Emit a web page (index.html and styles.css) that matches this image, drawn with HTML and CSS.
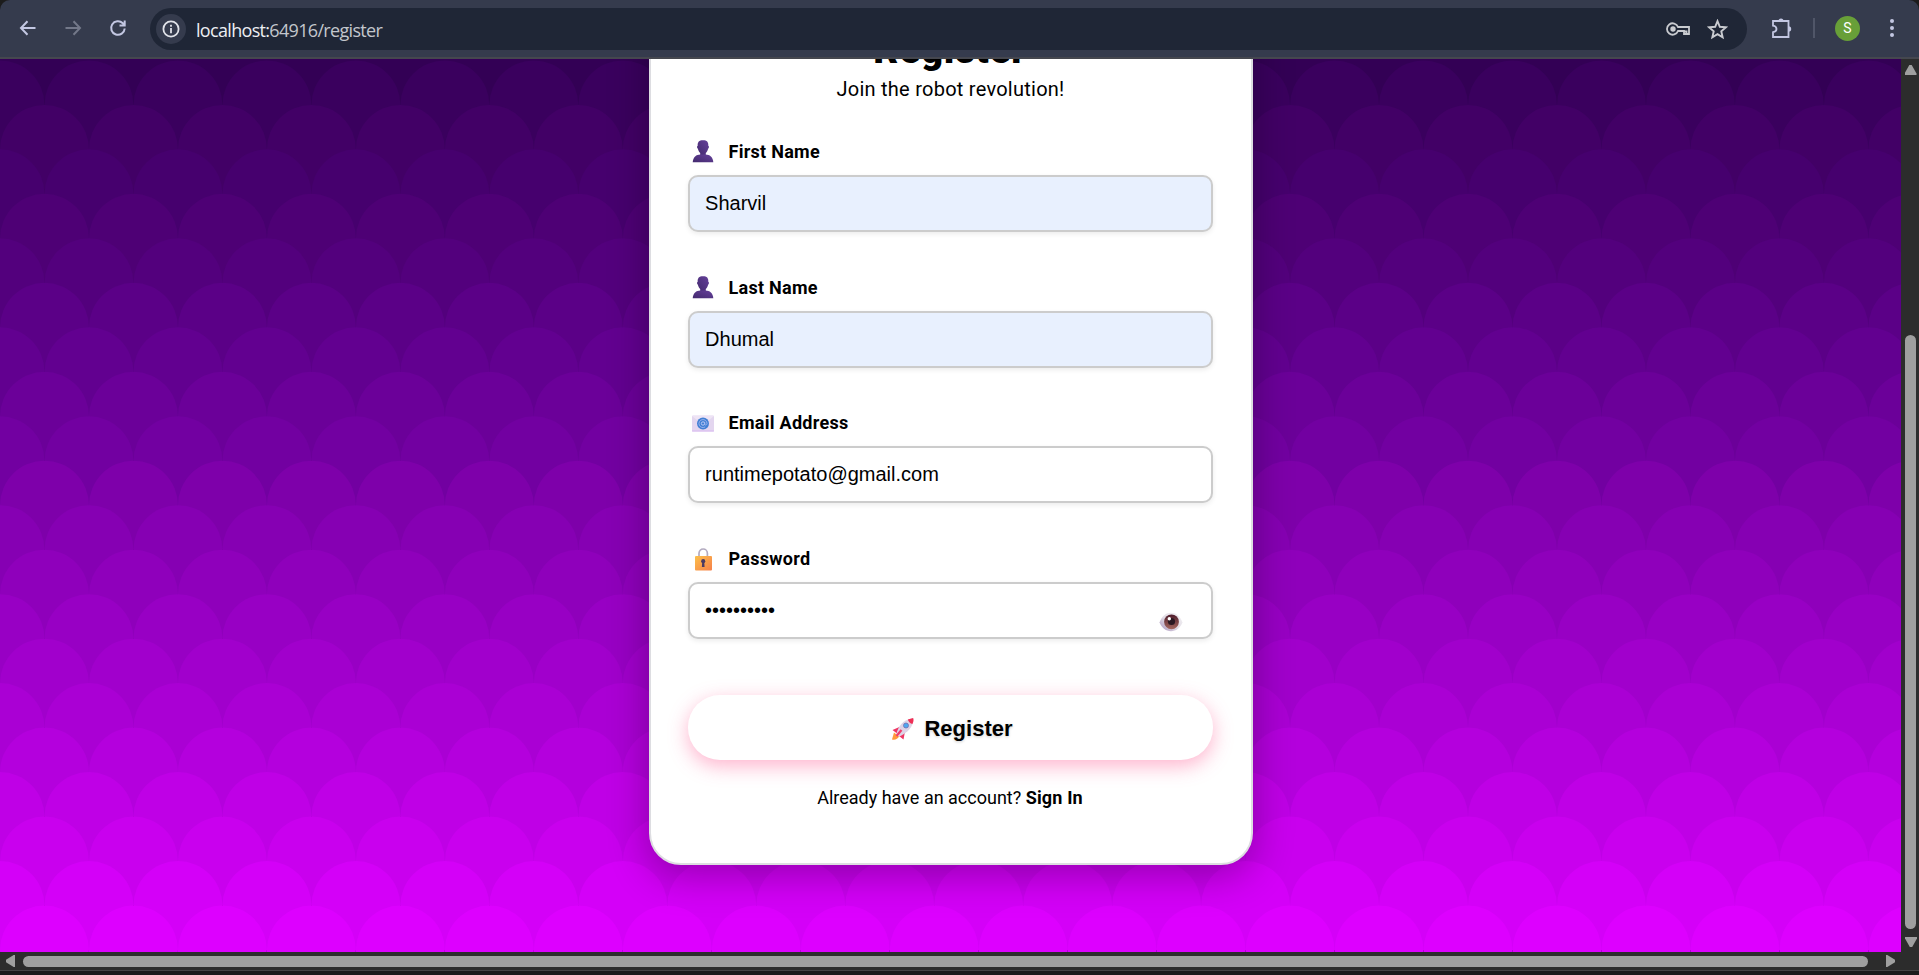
FILE: index.html
```html
<!DOCTYPE html>
<html lang="en">
<head>
<meta charset="utf-8">
<title>Register</title>
<link rel="stylesheet" href="styles.css">
</head>
<body>
<div class="browser">
  <header class="toolbar">
    <nav class="nav">
      <svg class="ico" viewBox="0 0 20 20"><path d="M17.500 10H3.500M9.500 3.300L3 10l6.500 6.700"/></svg>
      <svg class="ico dim" viewBox="0 0 20 20"><path d="M2.500 10h14M10.500 3.300L17 10l-6.500 6.700"/></svg>
      <svg class="ico" viewBox="0 0 20 20"><path d="M16.700 10.500a6.800 6.800 0 1 1-1.900-5.200l2 2M16.700 2.500v5H11.500"/></svg>
    </nav>
    <div class="omnibox">
      <span class="info"><svg viewBox="0 0 20 20"><circle cx="10" cy="10" r="7.600"/><path d="M10 9v5.200M10 5.700v2"/></svg></span>
      <span class="url">localhost:<span class="path">64916/register</span></span>
      <svg class="key" viewBox="0 0 24 14"><path d="M12 5h11v7h-5V9h-6a5.700 5.700 0 1 1 0-4z"/><path d="M18 9.500h2.500V12"/><circle cx="7" cy="7" r="2.700" class="solid"/></svg>
      <svg class="star" viewBox="0 0 20 20"><path d="M10 2l2.200 5.400 5.800.5-4.400 3.800 1.300 5.700-4.900-3-4.900 3 1.300-5.700L2 7.900l5.800-.5z"/></svg>
    </div>
    <div class="actions">
      <svg class="puzzle" viewBox="0 0 22 22"><path d="M2 4h15.500v16H2v-4.800c2.800-.5 3.500-1.500 3.500-3.200S4.800 9.200 2 8.700z"/><path class="solid" d="M7.500 4a2.500 2.500 0 0 1 5 0zM17.500 9.200a2.700 2.700 0 0 1 0 5.400z"/></svg>
      <span class="sep"></span>
      <span class="avatar">S</span>
      <svg class="dots" viewBox="0 0 6 20"><circle cx="3" cy="3" r="2"/><circle cx="3" cy="10" r="2"/><circle cx="3" cy="17" r="2"/></svg>
    </div>
  </header>

  <div class="viewport">
    <main class="page">
      <svg class="scales" viewBox="0 0 1901 893" id="scales"></svg>
      <section class="card">
        <h1>Register</h1>
        <p class="subtitle">Join the robot revolution!</p>
        <form>
          <div class="field">
            <label><svg class="emoji" viewBox="0 0 24 24"><use href="#person"/></svg>First Name</label>
            <div class="input filled">Sharvil</div>
          </div>
          <div class="field">
            <label><svg class="emoji" viewBox="0 0 24 24"><use href="#person"/></svg>Last Name</label>
            <div class="input filled">Dhumal</div>
          </div>
          <div class="field">
            <label><svg class="emoji" viewBox="0 0 24 24"><rect x="1" y="4.500" width="22" height="16" rx="1" fill="#e3d6ef"/><path d="M1 5l11 9 11-9" fill="#eee4f5"/><path d="M1 19.500h22v1H1z" fill="#d9b8f0"/><circle cx="12" cy="12.500" r="6" fill="#4280d4"/><circle cx="12" cy="12.500" r="1.700" fill="none" stroke="#b9c9f5" stroke-width="1"/><path d="M13.700 10.800v2.300c0 1.500 2.300 1.200 2.300-.7a4 4 0 1 0-1.800 3.500" fill="none" stroke="#a9bdf2" stroke-width=".8"/></svg>Email Address</label>
            <div class="input">runtimepotato@gmail.com</div>
          </div>
          <div class="field">
            <label><svg class="emoji" viewBox="0 0 24 24"><path d="M8 11V6.200a4.200 4.200 0 0 1 8.400 0V11" fill="none" stroke="#b3abc0" stroke-width="1.700"/><rect x="4" y="9" width="17" height="14.500" rx="1" fill="url(#gold)"/><circle cx="12.200" cy="14.200" r="2.100" fill="#4b3a62"/><path d="M11.300 14h1.900l.4 6h-2.700z" fill="#4b3a62"/></svg>Password</label>
            <div class="input password">••••••••••<svg class="eye" viewBox="0 0 24 20"><path d="M.5 10.500C3 4 7 .8 12 .8S21 4 23.500 10.500C21 16 17 19.200 12 19.200S3 16 .5 10.500z" fill="url(#white)"/><circle cx="12.500" cy="9.800" r="7.400" fill="url(#iris)"/><circle cx="12.500" cy="9.500" r="3.600" fill="#2a1822"/><circle cx="10.300" cy="6.800" r="1.700" fill="#fff"/></svg></div>
          </div>
          <div class="button"><svg class="rocket" viewBox="0 0 24 24"><path d="M3 15.500L1 22.500c3 .8 6-.5 7-3z" fill="#ff9a3c"/><path d="M9.500 9.500L1.500 13l4.500 3.500 5-3zM14 14.500L12.500 22.500 8 19l2-5z" fill="#ee3563"/><path d="M5.500 16.500C7 9.500 12 2.500 22 1.200c1 9-6 14.300-13.500 18.300z" fill="#ddd3e6"/><path d="M16.800 2.500l5.400-1.500c.7 2.200.2 4-.8 6-2-.5-4-2.200-4.600-4.500z" fill="#ee2f55"/><path d="M10.500 13L5.500 19" stroke="#f23c6c" stroke-width="2.300"/><circle cx="15" cy="8.500" r="2.500" fill="#4da8ef" stroke="#746eb3" stroke-width=".8"/></svg>Register</div>
        </form>
        <p class="signin">Already have an account? <b>Sign In</b></p>
      </section>
    </main>
    <div class="vbar"><i class="up"></i><div class="vthumb"></div><i class="down"></i></div>
  </div>
  <div class="hbar"><i class="left"></i><div class="hthumb"></div><i class="right"></i></div>
  <div class="bottom"></div>
</div>

<svg class="defs">
  <defs>
    <linearGradient id="violet" x1="0" x2="1" y1="1" y2="0"><stop offset="0" stop-color="#432a6e"/><stop offset="1" stop-color="#65409a"/></linearGradient>
    <linearGradient id="gold" x1="0" x2="1" y1="0" y2="1"><stop offset="0" stop-color="#fcc04a"/><stop offset="1" stop-color="#f6804a"/></linearGradient>
    <linearGradient id="iris" x1="0" x2="0" y1="0" y2="1"><stop offset="0" stop-color="#4d1c2b"/><stop offset="1" stop-color="#a4675f"/></linearGradient>
    <linearGradient id="white" x1="0" x2="1" y1="1" y2="0"><stop offset="0" stop-color="#a993bd"/><stop offset=".5" stop-color="#e4dfe7"/><stop offset="1" stop-color="#f4f2f5"/></linearGradient>
    <g id="person" fill="url(#violet)"><path d="M12 1.300c4 0 5.500 1.800 5.300 5.500.9.200.9 2.400-.2 2.900-.4 2-1.300 3.300-2.300 4.200v2.200H9.200v-2.200c-1-.9-1.900-2.200-2.300-4.200-1.100-.5-1.100-2.700-.2-2.900-.2-3.700 1.300-5.500 5.300-5.500z"/><path d="M1.700 23.200c.3-5 3.500-7.700 7.800-7.700h5c4.300 0 7.500 2.700 7.800 7.700z"/></g>
  </defs>
</svg>
<script src="scales.js"></script>
</body>
</html>
```
FILE: styles.css
```css
* { box-sizing: border-box; }
body { margin: 0; overflow: hidden; background: #1c1c1c; color: #000; font-family: Roboto, "Liberation Sans", sans-serif; }
.defs { position: absolute; width: 0; height: 0; }
.browser { display: flex; flex-direction: column; width: 1919px; height: 975px; }

.toolbar { display: flex; align-items: center; height: 59px; padding-bottom: 1px; background: #353b4d; border-bottom: 2px solid #45474f; border-radius: 10px 10px 0 0; }
.nav { display: flex; gap: 25px; width: 150px; padding-left: 18px; }
.nav svg { width: 20px; height: 20px; fill: none; stroke: #c3c7e2; stroke-width: 2; }
.nav .dim { stroke: #737889; }
.omnibox { display: flex; align-items: center; width: 1597px; height: 42px; margin-top: 2px; padding: 0 19px 0 6px; border-radius: 21px; background: #1f2636; }
.info { display: flex; align-items: center; justify-content: center; width: 30px; height: 30px; border-radius: 50%; background: #353b4d; }
.info svg { width: 20px; height: 20px; fill: none; stroke: #e1e3e9; stroke-width: 1.8; }
.url { flex: 1; margin-left: 10px; padding-top: 1px; color: #eceef2; font: 18px/24px "Open Sans", "Noto Sans", sans-serif; letter-spacing: -0.68px; }
.path { color: #c3c6cd; }
.key, .star { fill: none; stroke: #c9cbd0; stroke-width: 1.8; }
.key { width: 24px; height: 14px; margin-right: 17px; }
.star { width: 21px; height: 21px; }
.solid { fill: #c9cbd0; stroke: none; }
.actions { display: flex; align-items: center; flex: 1; padding-left: 24px; }
.puzzle { width: 22px; height: 22px; fill: none; stroke: #c3c7e2; stroke-width: 1.8; }
.puzzle .solid { fill: #c3c7e2; }
.sep { width: 2px; height: 20px; margin-left: 20px; background: #505668; }
.avatar { width: 25px; height: 25px; margin-left: 20px; border-radius: 50%; background: #689f38; color: #fff; font-size: 14px; line-height: 25px; text-align: center; }
.dots { width: 6px; height: 20px; margin-left: 29px; fill: #c3c7e2; }

.viewport { display: flex; height: 893px; }
.page { position: relative; display: flex; align-items: flex-end; justify-content: center; width: 1901px; height: 893px; padding-bottom: 87px; overflow: hidden; background: #330055; }
.scales { position: absolute; inset: 0; width: 1901px; height: 893px; }
.card { position: relative; width: 604px; flex: none; padding: 58px 38px 53px 37px; border: 2px solid #dddde1; border-radius: 32px; background: #fff; box-shadow: 0 10px 40px rgba(0, 0, 0, .3); text-align: center; }
h1 { margin: 0; font-size: 38.400px; font-weight: 900; line-height: 44px; letter-spacing: .8px; }
.subtitle { height: 26px; margin: 4px 0 35px; padding-left: 1px; font-size: 20px; line-height: 26px; letter-spacing: .25px; }
.field { margin-bottom: 40.7px; text-align: left; }
.field:last-of-type { margin-bottom: 0; }
label { display: flex; align-items: center; height: 30px; margin-bottom: 8px; padding-bottom: 1px; font-size: 18px; font-weight: 700; letter-spacing: .28px; }
.emoji { width: 24px; height: 24px; margin: 0 14px 0 3px; }
.input { position: relative; height: 57px; padding: 0 15.600px; border: 2px solid #ccc; border-radius: 10px; background: #fff; box-shadow: 0 2px 5px rgba(0, 0, 0, .08); font: 20px/53px "Liberation Sans", Arial, sans-serif; }
.filled { background: #e8f0fe; }
.eye { position: absolute; right: 28px; bottom: 5px; width: 24px; height: 20px; }
.button { display: flex; align-items: center; justify-content: center; height: 65px; margin-top: 56px; padding: 3px 0 0 4px; border-radius: 32px; background: #fff; box-shadow: 0 6px 20px rgba(255, 64, 129, .4); font: bold 22px "Liberation Sans", Arial, sans-serif; text-shadow: 0 1px 3px rgba(0, 0, 0, .2); }
.rocket { width: 24px; height: 24px; margin-right: 9px; }
.signin { height: 24px; margin: 26px 0 0; font-size: 18px; line-height: 24px; }
.signin b { letter-spacing: .15px; }

.vbar { display: flex; flex-direction: column; align-items: center; width: 18px; padding: 6px 0 5px 1px; background: #2c2c2c; }
.vthumb { width: 11px; height: 594px; margin-top: auto; margin-bottom: 8px; border-radius: 6px; background: #9f9f9f; }
.up, .down { width: 12px; height: 10px; background: #9f9f9f; clip-path: polygon(40% 0, 60% 0, 100% 85%, 100% 100%, 0 100%, 0 85%); }
.down { transform: rotate(180deg); }
.hbar { display: flex; align-items: center; height: 18px; padding-left: 6px; background: #2c2c2c; }
.hthumb { width: 1845px; height: 11px; margin: 0 18px 0 8px; border-radius: 6px; background: #9f9f9f; }
.left, .right { width: 9px; height: 12px; background: #9f9f9f; clip-path: polygon(0 40%, 85% 0, 100% 0, 100% 100%, 85% 100%, 0 60%); }
.right { transform: rotate(180deg); }
.bottom { height: 5px; background: #1c1c1c; border-top: 1px solid #454545; }
```
FILE: scales.js
```js
// Overlapping rows of circles, each row brighter than the one above it.
const rows = ['#3a005e', '#420066', '#46006e', '#4e0075', '#53007d', '#5b0087', '#620090', '#6b0099', '#7200a1', '#7e00aa',
  '#8600b3', '#8f00bb', '#9800c4', '#a100cc', '#aa00d4', '#b400dd', '#bf00e6', '#c900ee', '#d400f8', '#dd00ff'];
const R = 44.48;
let out = '';
rows.forEach((fill, k) => {
  out += `<g fill="${fill}">`;
  for (let i = 0; i < 23; i++) {
    out += `<circle cx="${i * 88.97 + (k % 2) * R}" cy="${1.4 + k * R + R}" r="${R}"/>`;
  }
  out += '</g>';
});
document.getElementById('scales').innerHTML = out;
```
